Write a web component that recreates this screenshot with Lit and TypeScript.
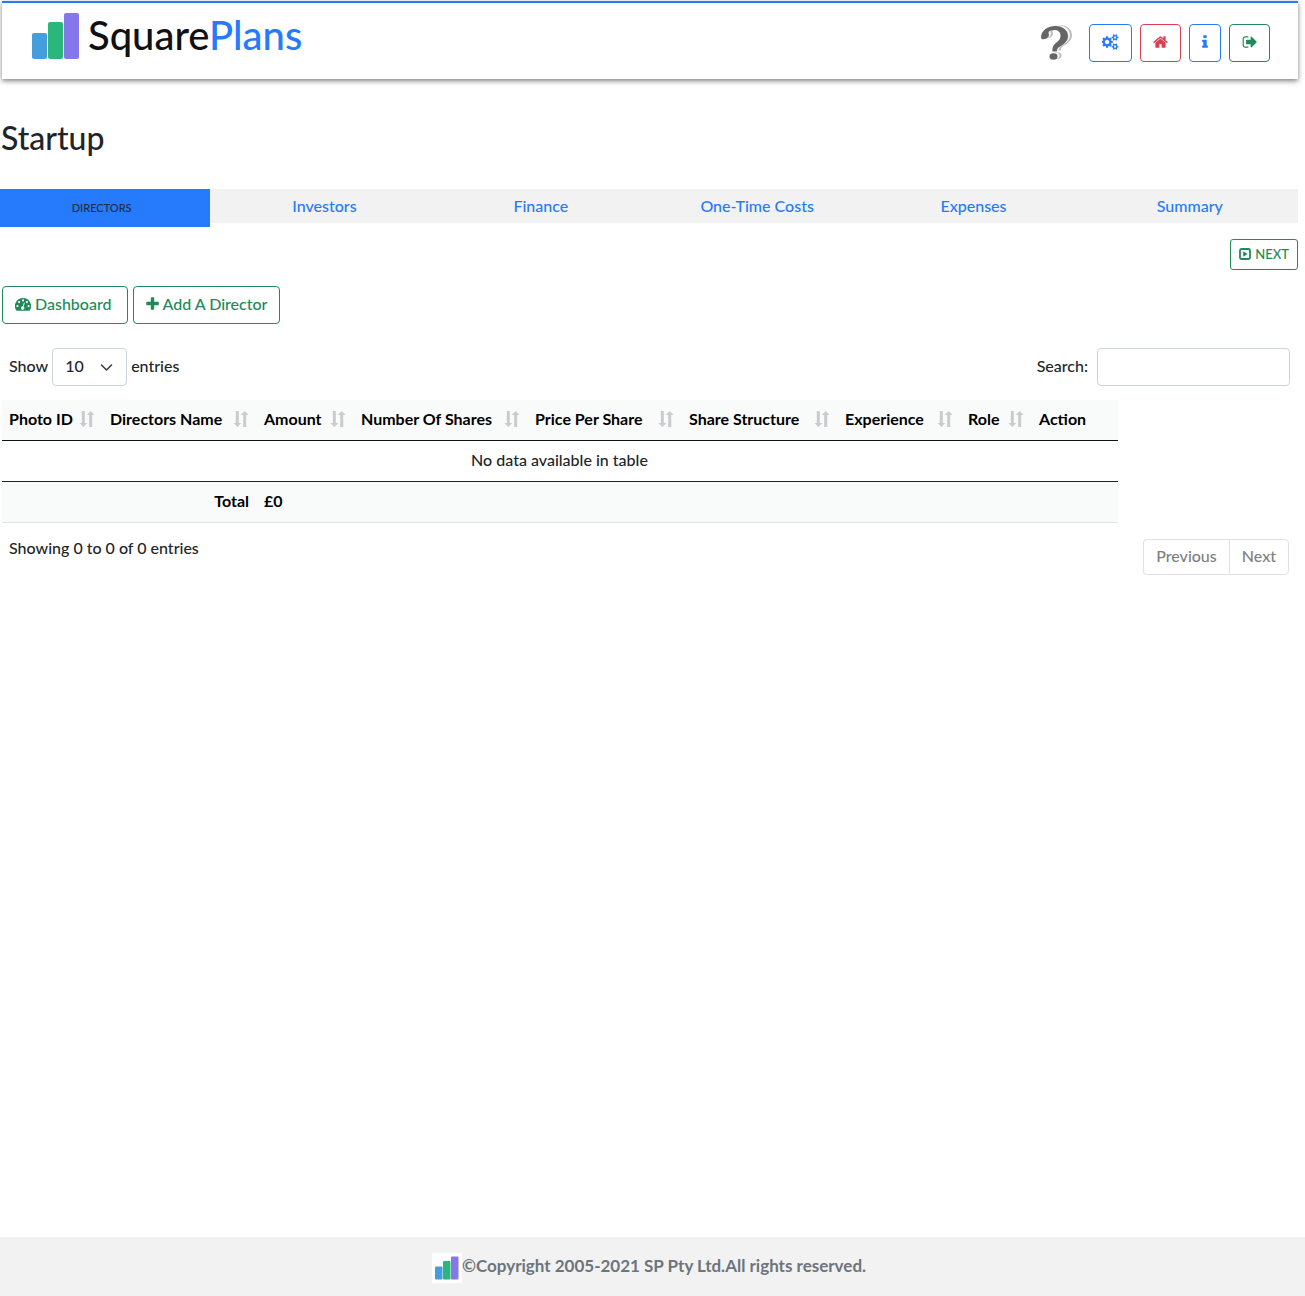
import { LitElement, html, css, svg } from "lit";
import { customElement, state } from "lit/decorators.js";

const COGS =
  "M832 896q0-106-75-181t-181-75-181 75-75 181 75 181 181 75 181-75 75-181zm768 512q0-52-38-90t-90-38-90 38-38 90q0 53 37.5 90.5t90.5 37.5 90.5-37.5 37.5-90.5zm0-1024q0-52-38-90t-90-38-90 38-38 90q0 53 37.5 90.5t90.5 37.5 90.5-37.5 37.5-90.5zm-384 421v185q0 10-7 19.5t-16 10.5l-155 24q-11 35-32 76 34 48 90 115 7 11 7 20 0 12-7 19-23 30-82.5 89.5t-78.5 59.5q-11 0-21-7l-115-90q-37 19-77 31-11 108-23 155-7 24-30 24h-186q-11 0-20-7.5t-10-17.5l-23-153q-34-10-75-31l-118 89q-7 7-20 7-11 0-21-8-144-133-144-160 0-9 7-19 10-14 41-53t47-61q-23-44-35-82l-152-24q-10-1-17-9.5t-7-19.5v-185q0-10 7-19.5t16-10.5l155-24q11-35 32-76-34-48-90-115-7-11-7-20 0-12 7-20 22-30 82-89t79-59q11 0 21 7l115 90q34-18 77-32 11-108 23-154 7-24 30-24h186q11 0 20 7.5t10 17.5l23 153q34 10 75 31l118-89q8-7 20-7 11 0 21 8 144 133 144 160 0 9-7 19-12 16-42 54t-45 60q23 48 34 82l152 23q10 2 17 10.5t7 19.5zm640 533v140q0 16-149 31-12 27-30 52 51 113 51 138 0 4-4 7-122 71-124 71-8 0-46-47t-52-68q-20 2-30 2t-30-2q-14 21-52 68t-46 47q-2 0-124-71-4-3-4-7 0-25 51-138-18-25-30-52-149-15-149-31v-140q0-16 149-31 13-29 30-52-51-113-51-138 0-4 4-7 4-2 35-20t59-34 30-16q8 0 46 46.5t52 67.5q20-2 30-2t30 2q51-71 92-112l6-2q4 0 124 70 4 3 4 7 0 25-51 138 17 23 30 52 149 15 149 31zm0-1024v140q0 16-149 31-12 27-30 52 51 113 51 138 0 4-4 7-122 71-124 71-8 0-46-47t-52-68q-20 2-30 2t-30-2q-14 21-52 68t-46 47q-2 0-124-71-4-3-4-7 0-25 51-138-18-25-30-52-149-15-149-31v-140q0-16 149-31 13-29 30-52-51-113-51-138 0-4 4-7 4-2 35-20t59-34 30-16q8 0 46 46.5t52 67.5q20-2 30-2t30 2q51-71 92-112l6-2q4 0 124 70 4 3 4 7 0 25-51 138 17 23 30 52 149 15 149 31z";
const HOME =
  "M1472 992v480q0 26-19 45t-45 19h-384v-384h-256v384h-384q-26 0-45-19t-19-45v-480q0-1 .5-3t.5-3l575-474 575 474q1 2 1 6zm223-69l-62 74q-8 9-21 11h-3q-13 0-21-7l-692-577-692 577q-12 8-24 7-13-2-21-11l-62-74q-8-10-7-23.5t11-21.5l719-599q32-26 76-26t76 26l244 204v-195q0-14 9-23t23-9h192q14 0 23 9t9 23v408l219 182q10 8 11 21.5t-7 23.5z";
const INFO =
  "M1216 1344v128q0 26-19 45t-45 19h-512q-26 0-45-19t-19-45v-128q0-26 19-45t45-19h64v-384h-64q-26 0-45-19t-19-45v-128q0-26 19-45t45-19h384q26 0 45 19t19 45v576h64q26 0 45 19t19 45zm-128-1152v192q0 26-19 45t-45 19h-256q-26 0-45-19t-19-45v-192q0-26 19-45t45-19h256q26 0 45 19t19 45z";
const SIGN_OUT =
  "M704 1440q0 4 1 20t.5 26.5-3 23.5-10 19.5-20.5 6.5h-320q-119 0-203.5-84.5t-84.5-203.5v-704q0-119 84.5-203.5t203.5-84.5h320q13 0 22.5 9.5t9.5 22.5q0 4 1 20t.5 26.5-3 23.5-10 19.5-20.5 6.5h-320q-66 0-113 47t-47 113v704q0 66 47 113t113 47h312l11.5 1 11.5 3 8 5.5 7 9 2 13.5zm928-544q0 26-19 45l-544 544q-19 19-45 19t-45-19-19-45v-288h-448q-26 0-45-19t-19-45v-384q0-26 19-45t45-19h448v-288q0-26 19-45t45-19 45 19l544 544q19 19 19 45z";
const PLUS =
  "M1600 736v192q0 40-28 68t-68 28h-416v416q0 40-28 68t-68 28h-192q-40 0-68-28t-28-68v-416h-416q-40 0-68-28t-28-68v-192q0-40 28-68t68-28h416v-416q0-40 28-68t68-28h192q40 0 68 28t28 68v416h416q40 0 68 28t28 68z";

const glyph = (path: string, viewBox: string, width: number) =>
  html`<svg class="icon" width=${width} height="16" viewBox=${viewBox} aria-hidden="true">
    <path fill="currentColor" d=${path}></path>
  </svg>`;

const bars = (size: number) => html`<svg width=${size} height=${size} viewBox="0 0 48 48" aria-hidden="true">
  <rect x="0" y="21" width="15" height="26" rx="2" fill="#459ddc"></rect>
  <rect x="16" y="10" width="15" height="37" rx="2" fill="#2bb77b"></rect>
  <rect x="32" y="1" width="15" height="46" rx="2" fill="#8576ec"></rect>
</svg>`;

const gauge = html`<svg class="icon" width="16" height="16" viewBox="0 0 16 16" aria-hidden="true">
  <path fill="currentColor" d="M8 2a8 8 0 0 0-6.8 12.3q.3.5.8.5h12q.5 0 .8-.5A8 8 0 0 0 8 2z"></path>
  <g fill="#fff">
    <circle cx="2.4" cy="10.1" r="1.1"></circle>
    <circle cx="4.1" cy="6.1" r="1.1"></circle>
    <circle cx="8" cy="4.4" r="1.1"></circle>
    <circle cx="11.9" cy="6.1" r="1.1"></circle>
    <circle cx="13.6" cy="10.1" r="1.1"></circle>
    <circle cx="7.7" cy="12" r="1.7"></circle>
  </g>
  <path d="M7.8 12 9.2 7.2" stroke="#fff" stroke-width="1" stroke-linecap="round"></path>
</svg>`;

const playSquare = html`<svg class="icon" width="12" height="12" viewBox="0 0 12 12" aria-hidden="true">
  <rect x="1" y="1" width="10" height="10" rx="1.5" fill="none" stroke="currentColor" stroke-width="1.8"></rect>
  <path d="M4.2 3.3 8.6 6 4.2 8.7z" fill="currentColor"></path>
</svg>`;

const sortArrows = html`<svg class="sort" width="16" height="18" viewBox="0 0 16 18" aria-hidden="true">
  <path d="M2.8 1h3v12H8.400L4.4 17 .4 13h2.4zM10.2 17h3V5h2.400L11.7 1 7.700 5h2.500z" fill="#c9cbcd"></path>
</svg>`;

const HOOK =
  "M0 12C0 4 7 0 14.500 0C22 0 27 4.500 27 10C27 15.500 22.500 18.500 19 20.500C16.500 22 15.800 23 15.800 25.500L11.500 25.500C11 21 13 18.500 15.500 16.500C18.500 14 19.500 12.500 19.500 9.500C19.500 6 17 4 13 4C10 4 7.500 5 7.500 6.500C7.500 8 8.500 8.500 7.500 10.500C6.500 13 1 14.500 0 12Z";
const question = html`<svg width="34" height="36" viewBox="0 0 34 36" aria-hidden="true">
  ${[
    { x: 5, y: 0, c: "#bdbdbd" },
    { x: 3, y: 0, c: "#f4f4f4" },
    { x: 1, y: 1, c: "#656565" },
  ].map(
    (l) => svg`<g fill=${l.c} transform="translate(${l.x} ${l.y})">
      <path d=${HOOK}></path><ellipse cx="12.500" cy="30.500" rx="4" ry="3.200"></ellipse>
    </g>`
  )}
</svg>`;

const TABS = ["Directors", "Investors", "Finance", "One-Time Costs", "Expenses", "Summary"];

const COLUMNS = [
  { label: "Photo ID", width: 101, sortable: true },
  { label: "Directors Name", width: 154, sortable: true },
  { label: "Amount", width: 97, sortable: true },
  { label: "Number Of Shares", width: 174, sortable: true },
  { label: "Price Per Share", width: 154, sortable: true },
  { label: "Share Structure", width: 156, sortable: true },
  { label: "Experience", width: 123, sortable: true },
  { label: "Role", width: 71, sortable: true },
  { label: "Action", width: 86, sortable: false },
];

@customElement("app-root")
export class AppRoot extends LitElement {
  @state() private active = 0;

  static styles = css`
    :host {
      display: flex;
      flex-direction: column;
      min-height: 100vh;
      background: #fff;
      color: #212529;
      font: 500 16px/24px "Trebuchet MS", Lato, "Open Sans", sans-serif;
      --blue: #267afc;
      --green: #22895a;
      --red: #dc3f50;
    }
    * { box-sizing: border-box; }
    svg { display: block; flex: none; }
    button, input, select { font: inherit; margin: 0; }
    a { color: inherit; text-decoration: none; }
    .bar {
      display: flex;
      align-items: center;
      justify-content: space-between;
      margin: 1px 7px 0 2px;
      height: 78px;
      padding: 4px 28px 0 30px;
      border-top: 2px solid var(--blue);
      background: #fff;
      box-shadow: 0 2px 5px rgba(0, 0, 0, 0.5);
    }
    .brand {
      display: flex;
      align-items: center;
      gap: 8px;
      padding-bottom: 14px;
      font-size: 40px;
      line-height: 48px;
      color: #111;
    }
    .brand b { font-weight: inherit; color: var(--blue); }
    .brand span { padding-bottom: 2px; }
    .tools { display: flex; align-items: center; gap: 8px; }
    .help { border: 0; padding: 0 7px 0 0; background: none; }
    .btn {
      display: inline-flex;
      align-items: center;
      justify-content: center;
      gap: 4px;
      height: 38px;
      padding: 0 12px 2px;
      border: 1px solid currentColor;
      border-radius: 4px;
      background: #fff;
      color: var(--green);
      white-space: nowrap;
    }
    .blue { color: var(--blue); }
    .red { color: var(--red); }
    .small { height: 31px; padding: 0 8px 1px; font-size: 13px; border-radius: 3px; }
    h1 {
      margin: 39px 0 31px 1px;
      font-size: 32px;
      line-height: 40px;
      font-weight: inherit;
    }
    .tabs {
      display: grid;
      grid-template-columns: repeat(6, 1fr);
      height: 34px;
      margin-right: 7px;
      background: #f2f2f2;
    }
    .tab {
      border: 0;
      padding: 0;
      height: 34px;
      background: none;
      color: var(--blue);
    }
    .tab.on {
      height: 38px;
      margin-right: 6px;
      padding-right: 7px;
      background: var(--blue);
      color: #212d3f;
      font-size: 11px;
      text-transform: uppercase;
    }
    main { flex: 1; padding: 16px 7px 0 2px; }
    .right { display: flex; justify-content: flex-end; }
    .actions { display: flex; gap: 5px; margin: 16px 0 24px; }
    .wide { padding-right: 15px; }
    .controls {
      display: flex;
      justify-content: space-between;
      padding: 0 8px 0 7px;
      margin-bottom: 14px;
    }
    .field { display: flex; align-items: center; gap: 4px; }
    .field label { padding-bottom: 2px; }
    .find { gap: 9px; }
    .pick, .search {
      height: 38px;
      border: 1px solid #ced4da;
      border-radius: 4px;
      background: #fff;
      color: #212529;
    }
    .pick {
      appearance: none;
      width: 75px;
      padding: 0 12px 2px;
    }
    .pickwrap { display: grid; align-items: center; }
    .pickwrap > * { grid-area: 1 / 1; }
    .chev { justify-self: end; margin-right: 14px; pointer-events: none; }
    .search { width: 193px; padding: 0 12px; }
    table { table-layout: fixed; width: 0; border-collapse: collapse; }
    th, td { height: 41px; padding: 0 8px 2px 7px; text-align: left; white-space: nowrap; }
    th { color: #000; font-weight: 700; }
    thead th { height: 40px; }
    thead, tfoot { background: #f9fbfa; }
    thead tr { border-bottom: 1px solid #111; }
    tbody tr { border-bottom: 1px solid #212529; }
    tfoot tr { border-bottom: 1px solid #dee2e2; }
    .head { display: flex; align-items: center; justify-content: space-between; }
    .empty { text-align: center; }
    .total { text-align: right; }
    .below { display: flex; justify-content: space-between; padding: 13px 9px 0 7px; }
    .pages { display: flex; margin-top: 3px; }
    .page {
      height: 36px;
      padding: 0 12px 2px;
      border: 1px solid #dee2e6;
      background: #fff;
      color: #7d7f81;
    }
    .page:first-child { border-radius: 4px 0 0 4px; border-right: 0; }
    .page:last-child { border-radius: 0 4px 4px 0; }
    footer {
      display: flex;
      align-items: center;
      justify-content: center;
      height: 59px;
      padding: 2px 7px 0 0;
      background: #f2f2f2;
      color: #6c757d;
      font-weight: 700;
      font-size: 17px;
    }
    footer span { padding-bottom: 3px; }
    footer .mark { padding: 3px; background: #fff; }
  `;

  render() {
    return html`
      <header class="bar">
        <a class="brand" href="#">${bars(48)}<span>Square<b>Plans</b></span></a>
        <div class="tools">
          <button class="help" aria-label="Help">${question}</button>
          <button class="btn blue" aria-label="Settings">${glyph(COGS, "0 0 1920 1792", 17)}</button>
          <button class="btn red" aria-label="Home">${glyph(HOME, "64 0 1664 1792", 15)}</button>
          <button class="btn blue" aria-label="Information">${glyph(INFO, "576 0 640 1792", 6)}</button>
          <button class="btn" aria-label="Sign out">${glyph(SIGN_OUT, "0 0 1664 1792", 15)}</button>
        </div>
      </header>
      <h1>Startup</h1>
      <nav class="tabs">
        ${TABS.map(
          (t, i) => html`<button class="tab ${i === this.active ? "on" : ""}" @click=${() => (this.active = i)}>${t}</button>`
        )}
      </nav>
      <main>
        <div class="right"><button class="btn small">${playSquare}NEXT</button></div>
        <div class="actions">
          <button class="btn wide">${gauge}Dashboard</button>
          <button class="btn">${glyph(PLUS, "192 0 1408 1792", 13)}Add A Director</button>
        </div>
        <div class="controls">
          <div class="field">
            <label for="count">Show</label>
            <span class="pickwrap">
              <select class="pick" id="count">
                <option>10</option>
                <option>25</option>
                <option>50</option>
                <option>100</option>
              </select>
              <svg class="chev" width="13" height="12" viewBox="0 0 13 12" aria-hidden="true">
                <path d="M1.500 4l5 5 5-5" fill="none" stroke="#343a40" stroke-width="1.500" stroke-linecap="round" stroke-linejoin="round"></path>
              </svg>
            </span>
            <label for="count">entries</label>
          </div>
          <div class="field find">
            <label for="find">Search:</label>
            <input class="search" id="find" type="search" />
          </div>
        </div>
        <table>
          <colgroup>
            ${COLUMNS.map((c) => html`<col style="width:${c.width}px" />`)}
          </colgroup>
          <thead>
            <tr>
              ${COLUMNS.map(
                (c) => html`<th scope="col"><span class="head">${c.label}${c.sortable ? sortArrows : ""}</span></th>`
              )}
            </tr>
          </thead>
          <tbody>
            <tr><td class="empty" colspan="9">No data available in table</td></tr>
          </tbody>
          <tfoot>
            <tr>
              <th class="total" colspan="2">Total</th>
              <th colspan="7">£0</th>
            </tr>
          </tfoot>
        </table>
        <div class="below">
          <span>Showing 0 to 0 of 0 entries</span>
          <div class="pages">
            <button class="page">Previous</button>
            <button class="page">Next</button>
          </div>
        </div>
      </main>
      <footer><span class="mark">${bars(24)}</span><span>©Copyright 2005-2021 SP Pty Ltd.All rights reserved.</span></footer>
    `;
  }
}
